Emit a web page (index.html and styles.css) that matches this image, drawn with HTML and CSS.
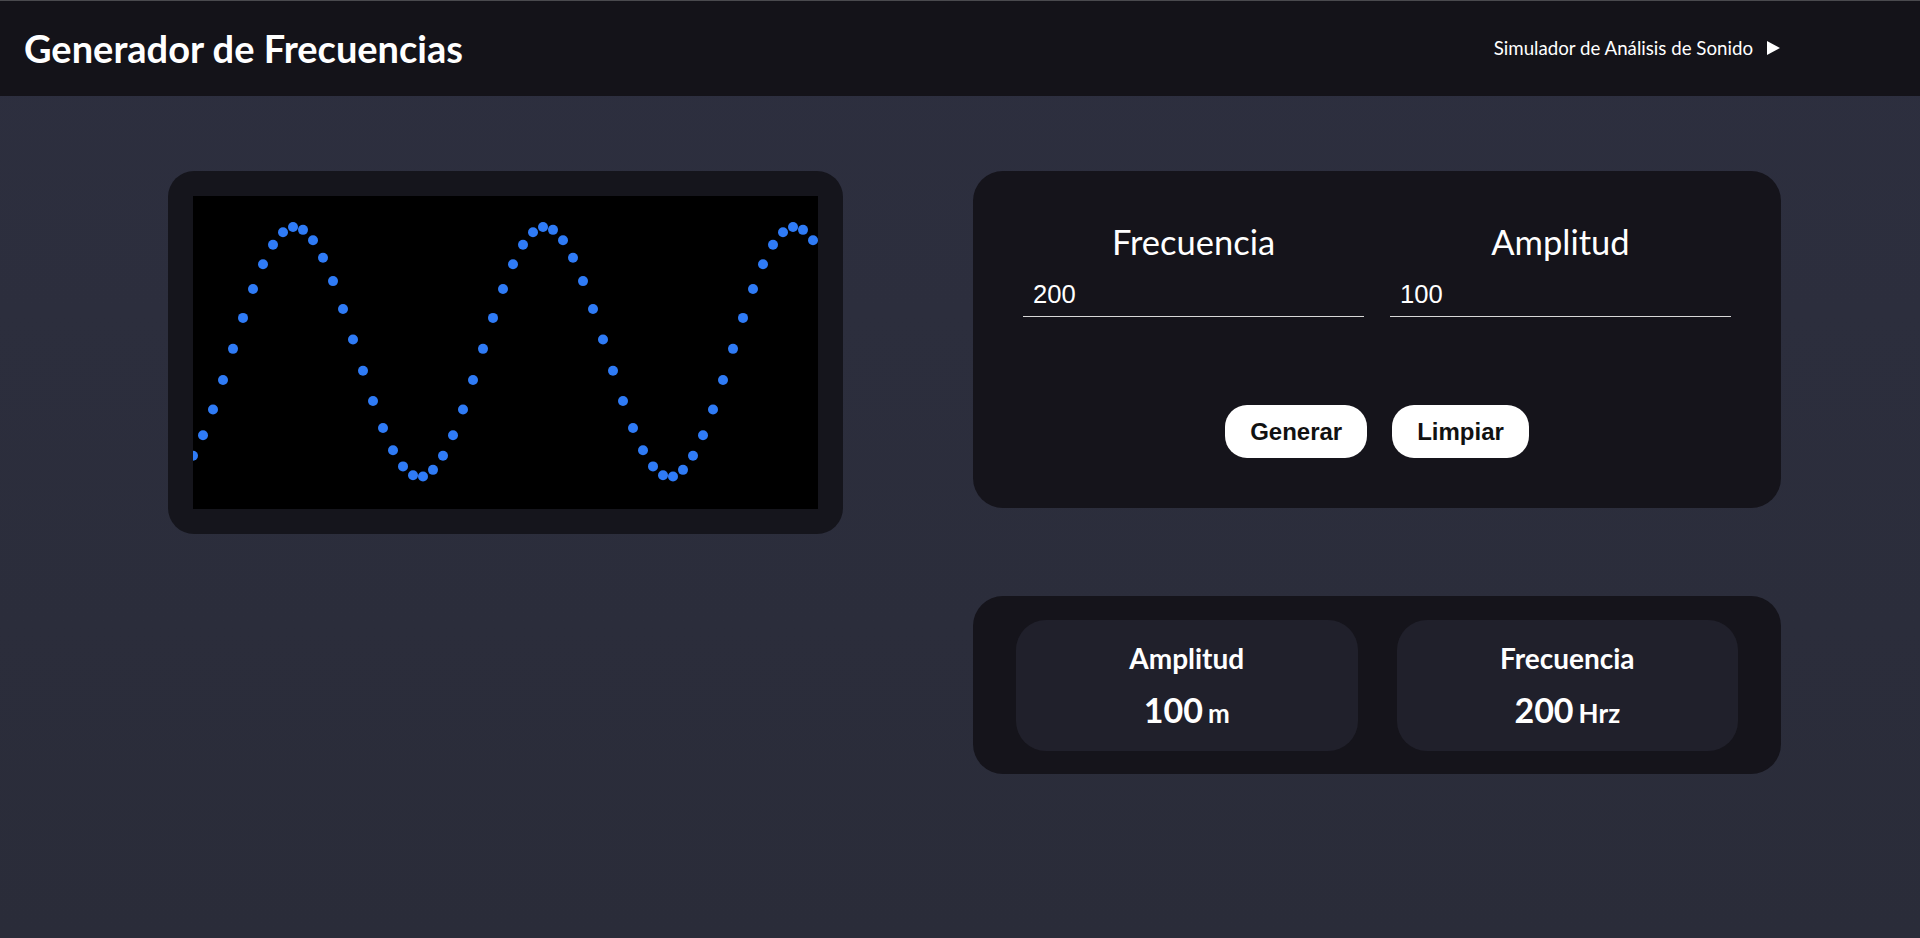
FILE: index.html
```html
<!DOCTYPE html>
<html lang="es">
<head>
<meta charset="utf-8">
<title>Generador de Frecuencias</title>
<link rel="stylesheet" href="styles.css">
</head>
<body>
<header class="topbar">
  <h1 class="brand">Generador de Frecuencias</h1>
  <a class="nav-link" href="#">Simulador de Análisis de Sonido <span class="tri"></span></a>
</header>
<main class="layout">
  <section class="scope-card">
    <canvas id="scope" class="scope" width="625" height="313"></canvas>
  </section>
  <div class="right-col">
    <section class="controls-card">
      <div class="fields">
        <label class="field">
          <span class="field-label">Frecuencia</span>
          <input class="field-input" type="text" value="200">
        </label>
        <label class="field">
          <span class="field-label">Amplitud</span>
          <input class="field-input" type="text" value="100">
        </label>
      </div>
      <div class="actions">
        <button class="btn">Generar</button>
        <button class="btn">Limpiar</button>
      </div>
    </section>
    <section class="readout-card">
      <div class="readout">
        <div class="readout-title">Amplitud</div>
        <div class="readout-value">100<span class="unit">m</span></div>
      </div>
      <div class="readout">
        <div class="readout-title">Frecuencia</div>
        <div class="readout-value">200<span class="unit">Hrz</span></div>
      </div>
    </section>
  </div>
</main>
<script src="app.js"></script>
</body>
</html>
```

FILE: styles.css
```css
* { box-sizing: border-box; }
html, body { margin: 0; padding: 0; }
body {
  min-height: 938px;
  background: linear-gradient(180deg, #2d2f3f 0%, #2a2c39 100%);
  font-family: Lato, "Liberation Sans", sans-serif;
  color: #fff;
}
.topbar {
  height: 96px;
  border-top: 1px solid #4a4a4e;
  background: #141319;
  display: flex;
  align-items: center;
  justify-content: space-between;
  padding: 0 140px 0 24px;
}
.brand {
  margin: 0;
  font-family: Lato, sans-serif;
  font-weight: 700;
  font-size: 38px;
  line-height: 1.2;
  color: #fff;
}
.nav-link {
  display: flex;
  align-items: center;
  gap: 14px;
  color: #fff;
  text-decoration: none;
  font-size: 18.7px;
  font-family: Lato, sans-serif;
  margin-top: -2px;
}
.tri {
  width: 0; height: 0;
  border-left: 13px solid #fff;
  border-top: 7px solid transparent;
  border-bottom: 7px solid transparent;
}
.layout {
  display: grid;
  grid-template-columns: 675px 808px;
  column-gap: 130px;
  align-items: start;
  padding: 75px 0 0 168px;
}
.scope-card {
  background: #15151c;
  border-radius: 26px;
  padding: 25px;
}
.scope {
  display: block;
  width: 625px;
  height: 313px;
  background: #000;
}
.right-col {
  display: flex;
  flex-direction: column;
  gap: 88px;
}
.controls-card {
  background: #15141b;
  border-radius: 30px;
  padding: 50px 50px 50px;
}
.fields {
  display: grid;
  grid-template-columns: minmax(0, 1fr) minmax(0, 1fr);
  column-gap: 26px;
}
.field {
  display: flex;
  flex-direction: column;
  align-items: stretch;
  min-width: 0;
}
.field-label {
  text-align: center;
  font-size: 34.5px;
  line-height: 1.2;
  font-weight: 400;
}
.field-input {
  width: 100%;
  min-width: 0;
  margin-top: 10px;
  height: 45px;
  background: transparent;
  border: none;
  border-bottom: 1px solid #d8d8d8;
  color: #fff;
  font-family: "Liberation Sans", Arial, sans-serif;
  font-size: 25.6px;
  padding: 0 10px;
  outline: none;
}
.actions {
  margin-top: 88px;
  display: flex;
  justify-content: center;
  gap: 25px;
}
.btn {
  height: 53px;
  padding: 0 25px;
  border: none;
  border-radius: 22px;
  background: #fff;
  color: #111;
  font-family: "Liberation Sans", Arial, sans-serif;
  font-weight: 700;
  font-size: 24px;
}
.readout-card {
  background: #15141b;
  border-radius: 30px;
  padding: 24px 43px 23px;
  display: grid;
  grid-template-columns: minmax(0, 1fr) minmax(0, 1fr);
  column-gap: 39px;
}
.readout {
  height: 131px;
  background: #20202b;
  border-radius: 30px;
  display: flex;
  flex-direction: column;
  align-items: center;
  padding-top: 22px;
}
.readout-title {
  font-weight: 700;
  font-size: 28px;
  line-height: 1.2;
}
.readout-value {
  margin-top: 14px;
  font-weight: 700;
  font-size: 34px;
  line-height: 1.2;
}
.unit {
  font-size: 26px;
  margin-left: 5px;
}
```

FILE: app.js
```js
(function () {
  var c = document.getElementById('scope');
  var ctx = c.getContext('2d');
  ctx.fillStyle = '#000';
  ctx.fillRect(0, 0, c.width, c.height);
  ctx.fillStyle = '#2f7bf6';
  for (var x = 0; x <= 620; x += 10) {
    var y = 156 - 125 * Math.cos(2 * Math.PI * (x - 101.5) / 250);
    ctx.beginPath();
    ctx.arc(x, y, 5, 0, Math.PI * 2);
    ctx.fill();
  }
})();
```
